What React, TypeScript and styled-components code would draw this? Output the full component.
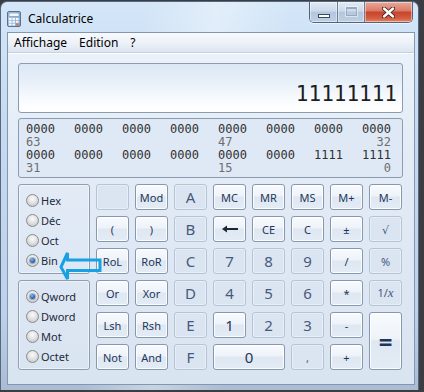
import React from 'react';
import styled, { createGlobalStyle, css } from 'styled-components';

const Global = createGlobalStyle`
  html, body { margin: 0; padding: 0; background: #3a3d42; }
  body { width: 424px; height: 392px; overflow: hidden; font-family: "Noto Sans", "DejaVu Sans", sans-serif; }
  #root { width: 424px; height: 392px; }
`;

const Window = styled.div`
  width: 419px;
  height: 389px;
  margin-top: 1px;
  box-sizing: border-box;
  border: 1px solid #56677e;
  border-bottom: none;
  border-radius: 7px 7px 0 0;
  background:
    linear-gradient(100deg, rgba(255,255,255,0) 30%, rgba(255,255,255,0.35) 45%, rgba(255,255,255,0) 60%),
    linear-gradient(180deg, #d4e6f8 0%, #c6dbf1 30%, #bdd2ea 80%, #a9bcd3 100%);
  padding: 0 3px 5px 6px;
  display: flex;
  flex-direction: column;
`;

const TitleBar = styled.div`
  height: 30px;
  display: flex;
  align-items: flex-start;
`;

const TitleLeft = styled.div`
  display: flex;
  align-items: center;
  gap: 7px;
  height: 16px;
  margin-top: 9px;
  flex: 1;
`;

const TitleText = styled.span`
  font-size: 12px;
  color: #000;
  line-height: 16px;
`;

const Caption = styled.div`
  display: flex;
  margin-right: 2px;
  height: 20px;
  border: 1px solid #53637a;
  border-top: none;
  border-radius: 0 0 5px 5px;
  overflow: hidden;
  box-shadow: 0 1px 0 rgba(255,255,255,0.6);
`;

const CapBtn = styled.div<{ $w: number; $close?: boolean }>`
  width: ${p => p.$w}px;
  height: 20px;
  display: flex;
  align-items: center;
  justify-content: center;
  box-sizing: border-box;
  border-right: 1px solid #6b7c93;
  box-shadow: inset 0 0 0 1px rgba(255,255,255,0.45);
  ${p => p.$close
    ? css`
      border-right: none;
      background: linear-gradient(180deg, #e9a99a 0%, #dc7d69 42%, #c8452d 52%, #d35a40 80%, #e28866 100%);
    `
    : css`
      background: linear-gradient(180deg, #e1ebf6 0%, #cbdaeb 45%, #b4c7de 52%, #bccfe4 100%);
    `}
`;

const MinGlyph = styled.div`
  width: 12px;
  height: 4px;
  box-sizing: border-box;
  border: 1px solid #3b4a5e;
  background: #fff;
  margin-top: 8px;
`;

const MaxGlyph = styled.div`
  width: 11px;
  height: 9px;
  box-sizing: border-box;
  border: 1px solid #9aa9bd;
  border-top-width: 2px;
  margin-bottom: 1px;
  box-shadow: 0 0 0 1px rgba(255,255,255,0.5);
`;

const Client = styled.div`
  flex: 1;
  display: flex;
  flex-direction: column;
  border: 1px solid #8596ad;
  background: linear-gradient(180deg, #ebf2fa 0%, #e2ebf6 40%, #d9e4f1 100%);
`;

const MenuBar = styled.div`
  height: 19px;
  display: flex;
  align-items: center;
  gap: 12px;
  padding-left: 6px;
  border-bottom: 1px solid #c3d1e3;
  background: linear-gradient(180deg, #f7fafd 0%, #edf2f9 50%, #dce5f1 100%);
  box-shadow: 0 1px 0 #fff;
`;

const MenuItem = styled.span`
  font-size: 12px;
  color: #000;
  line-height: 19px;
`;

const Content = styled.div`
  padding: 10px 11px 12px 10px;
  display: flex;
  flex-direction: column;
`;

const Display = styled.div`
  height: 50px;
  box-sizing: border-box;
  border: 1px solid #8d9bb0;
  border-radius: 3px;
  background: linear-gradient(180deg, #dce7f5 0%, #e7eff9 35%, #f9fbfe 75%, #ffffff 100%);
  display: flex;
  align-items: flex-end;
  justify-content: flex-end;
  padding: 0 5px 6px 0;
  margin-bottom: 5px;
`;

const DisplayValue = styled.span`
  font-family: "DejaVu Sans Mono", "Liberation Mono", monospace;
  font-size: 21px;
  line-height: 24px;
  color: #1e1e1e;
`;

const Bits = styled.div`
  height: 60px;
  box-sizing: border-box;
  border: 1px solid #8d9bb0;
  border-radius: 3px;
  background: #dfe9f5;
  padding: 4px 0 0 7px;
  display: grid;
  grid-template-columns: repeat(7, 48px) 29px;
  grid-auto-rows: 13px;
  margin-bottom: 6px;
  font-family: "DejaVu Sans Mono", "Liberation Mono", monospace;
  font-size: 12px;
  line-height: 13px;
`;

const Nibble = styled.span`
  color: #303030;
`;

const BitLabel = styled.span<{ $col: number; $right?: boolean }>`
  color: #6e6e6e;
  grid-column: ${p => p.$col};
  text-align: ${p => (p.$right ? 'right' : 'left')};
`;

const Keypad = styled.div`
  position: relative;
  display: grid;
  grid-template-columns: 72px repeat(8, 33px);
  grid-template-rows: repeat(6, 26px);
  column-gap: 6px;
  row-gap: 6px;
`;

const Group = styled.div<{ $row: number }>`
  grid-column: 1;
  grid-row: ${p => p.$row} / span 3;
  box-sizing: border-box;
  border: 1px solid #8e9fb5;
  border-radius: 3px;
  box-shadow: inset 0 0 0 1px rgba(255,255,255,0.5);
  padding: 5px 0 0 7px;
  display: flex;
  flex-direction: column;
`;

const RadioRow = styled.div`
  height: 20px;
  display: flex;
  align-items: center;
  gap: 2px;
  font-size: 11px;
  color: #1e2a3a;
`;

const RadioDot = styled.span<{ $on?: boolean }>`
  width: 13px;
  height: 13px;
  box-sizing: border-box;
  border-radius: 50%;
  border: 1px solid #8a8c8f;
  background: radial-gradient(circle at 50% 35%, #fbfbfb 0%, #e3e3e3 45%, #b9bbbe 100%);
  display: flex;
  align-items: center;
  justify-content: center;
  &::after {
    content: '';
    display: ${p => (p.$on ? 'block' : 'none')};
    width: 5px;
    height: 5px;
    border-radius: 50%;
    background: radial-gradient(circle at 40% 35%, #7fb6f0 0%, #2a62b3 60%, #12386e 100%);
    box-shadow: 0 0 0 1px rgba(30,70,130,0.35);
  }
`;

const Key = styled.div<{ $off?: boolean; $big?: boolean; $wide?: boolean; $tall?: boolean }>`
  box-sizing: border-box;
  border-radius: 3px;
  display: flex;
  align-items: center;
  justify-content: center;
  font-size: ${p => (p.$big ? '15px' : '11px')};
  ${p => p.$wide && css`grid-column: span 2;`}
  ${p => p.$tall && css`grid-row: span 2; font-size: 24px; font-weight: 700;`}
  ${p => p.$off
    ? css`
      border: 1px solid #b6c4d6;
      background: #dbe5f1;
      color: #46597a;
      box-shadow: inset 0 0 0 1px rgba(255,255,255,0.35);
    `
    : css`
      border: 1px solid #8797ad;
      background: linear-gradient(180deg, #f8fafd 0%, #eef3f9 46%, #dfe8f2 50%, #e3ebf5 100%);
      color: #1d375a;
      box-shadow: inset 0 0 0 1px rgba(255,255,255,0.85);
    `}
`;

const Italic = styled.i`
  font-family: "Liberation Serif", serif;
  font-size: 13px;
`;

const ArrowOverlay = styled.svg`
  position: absolute;
  left: 38px;
  top: 64px;
  pointer-events: none;
`;

type KeyDef = { l: React.ReactNode; off?: boolean; big?: boolean; wide?: boolean; tall?: boolean };

const BackArrow = () => (
  <svg width="18" height="8" viewBox="0 0 18 8">
    <path d="M17 4H4" stroke="#1b2736" strokeWidth="2" />
    <path d="M1 4L6 0.5V7.5Z" fill="#1b2736" />
  </svg>
);

const keys: KeyDef[] = [
  { l: '', off: true }, { l: 'Mod' }, { l: 'A', off: true, big: true }, { l: 'MC' }, { l: 'MR' }, { l: 'MS' }, { l: 'M+' }, { l: 'M-' },
  { l: '(' }, { l: ')' }, { l: 'B', off: true, big: true }, { l: <BackArrow /> }, { l: 'CE' }, { l: 'C' }, { l: '±' }, { l: '√', off: true },
  { l: 'RoL' }, { l: 'RoR' }, { l: 'C', off: true, big: true }, { l: '7', off: true, big: true }, { l: '8', off: true, big: true }, { l: '9', off: true, big: true }, { l: '/' }, { l: '%', off: true },
  { l: 'Or' }, { l: 'Xor' }, { l: 'D', off: true, big: true }, { l: '4', off: true, big: true }, { l: '5', off: true, big: true }, { l: '6', off: true, big: true }, { l: '*' }, { l: <span>1/<Italic>x</Italic></span>, off: true },
  { l: 'Lsh' }, { l: 'Rsh' }, { l: 'E', off: true, big: true }, { l: '1', big: true }, { l: '2', off: true, big: true }, { l: '3', off: true, big: true }, { l: '-' }, { l: '=', tall: true },
  { l: 'Not' }, { l: 'And' }, { l: 'F', off: true, big: true }, { l: '0', big: true, wide: true }, { l: ',', off: true }, { l: '+' },
];

const CalcIcon = () => (
  <svg width="14" height="16" viewBox="0 0 14 16">
    <defs>
      <linearGradient id="cb" x1="0" y1="0" x2="1" y2="1">
        <stop offset="0" stopColor="#b9d4ee" />
        <stop offset="1" stopColor="#7e9fc4" />
      </linearGradient>
    </defs>
    <rect x="0.5" y="0.5" width="13" height="15" rx="1.5" fill="url(#cb)" stroke="#5a7191" />
    <rect x="2" y="2" width="10" height="3.5" fill="#eef6ff" stroke="#6d87a8" strokeWidth="0.6" />
    {[0, 1, 2].map(r => [0, 1, 2].map(c => (
      <rect key={`${r}-${c}`} x={2 + c * 3.5} y={7 + r * 2.8} width="2.6" height="2" fill={c === 2 && r === 2 ? '#e07a3a' : '#f5f8fc'} />
    )))}
  </svg>
);

const nibblesTop = ['0000', '0000', '0000', '0000', '0000', '0000', '0000', '0000'];
const nibblesBot = ['0000', '0000', '0000', '0000', '0000', '0000', '1111', '1111'];

export default function App() {
  return (
    <>
      <Global />
      <Window>
        <TitleBar>
          <TitleLeft>
            <CalcIcon />
            <TitleText>Calculatrice</TitleText>
          </TitleLeft>
          <Caption>
            <CapBtn $w={28}><MinGlyph /></CapBtn>
            <CapBtn $w={27}><MaxGlyph /></CapBtn>
            <CapBtn $w={47} $close>
              <svg width="13" height="11" viewBox="0 0 13 11">
                <path d="M2 1.5L11 9.5M11 1.5L2 9.5" stroke="#3a2320" strokeWidth="4.2" strokeLinecap="round" />
                <path d="M2 1.5L11 9.5M11 1.5L2 9.5" stroke="#ffffff" strokeWidth="2.4" strokeLinecap="round" />
              </svg>
            </CapBtn>
          </Caption>
        </TitleBar>
        <Client>
          <MenuBar>
            <MenuItem>Affichage</MenuItem>
            <MenuItem>Edition</MenuItem>
            <MenuItem>?</MenuItem>
          </MenuBar>
          <Content>
            <Display>
              <DisplayValue>11111111</DisplayValue>
            </Display>
            <Bits>
              {nibblesTop.map((n, i) => <Nibble key={`t${i}`}>{n}</Nibble>)}
              <BitLabel $col={1}>63</BitLabel>
              <BitLabel $col={5}>47</BitLabel>
              <BitLabel $col={8} $right>32</BitLabel>
              {nibblesBot.map((n, i) => <Nibble key={`b${i}`}>{n}</Nibble>)}
              <BitLabel $col={1}>31</BitLabel>
              <BitLabel $col={5}>15</BitLabel>
              <BitLabel $col={8} $right>0</BitLabel>
            </Bits>
            <Keypad>
              <Group $row={1}>
                {['Hex', 'Déc', 'Oct', 'Bin'].map(t => (
                  <RadioRow key={t}><RadioDot $on={t === 'Bin'} />{t}</RadioRow>
                ))}
              </Group>
              <Group $row={4}>
                {['Qword', 'Dword', 'Mot', 'Octet'].map(t => (
                  <RadioRow key={t}><RadioDot $on={t === 'Qword'} />{t}</RadioRow>
                ))}
              </Group>
              {keys.map((k, i) => (
                <Key key={i} $off={k.off} $big={k.big} $wide={k.wide} $tall={k.tall}>{k.l}</Key>
              ))}
              <ArrowOverlay width="50" height="36" viewBox="0 0 50 36">
                <polygon points="5,19 11.5,5 11.5,12 44,12 44,22.5 11.5,22.5 11.5,31" fill="none" stroke="#17a0e4" strokeWidth="3" strokeLinejoin="miter" />
              </ArrowOverlay>
            </Keypad>
          </Content>
        </Client>
      </Window>
    </>
  );
}
